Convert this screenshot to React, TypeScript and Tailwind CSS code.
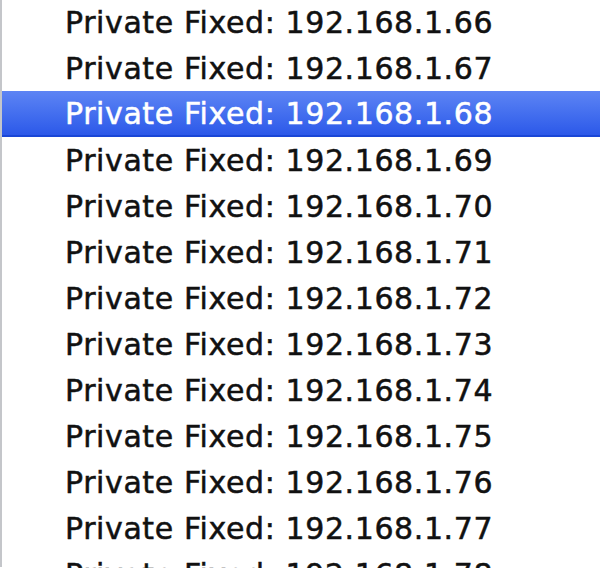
import React from 'react';

const addresses = [66, 67, 68, 69, 70, 71, 72, 73, 74, 75, 76, 77, 78];

export default function App() {
  const selected = 68;

  return (
    <div className="w-[600px] h-[568px] overflow-hidden bg-white">
      <div className="h-full border-l-2 border-[#c4c6ca]">
        <ul className="-mt-px" style={{ fontFamily: '"DejaVu Sans", Verdana, sans-serif' }}>
          {addresses.map((n) => {
            const isSelected = n === selected;
            return (
              <li
                key={n}
                className={`h-[46px] flex items-center pl-[63px] text-[30px] tracking-[0.6px] whitespace-nowrap [-webkit-text-stroke:0.5px_currentColor] ${
                  isSelected
                    ? 'bg-gradient-to-b from-[#5d84f4] to-[#2c58e9] border-b-2 border-[#1a46d6] text-white'
                    : 'text-[#111]'
                }`}
              >
                Private Fixed: 192.168.1.{n}
              </li>
            );
          })}
        </ul>
      </div>
    </div>
  );
}
